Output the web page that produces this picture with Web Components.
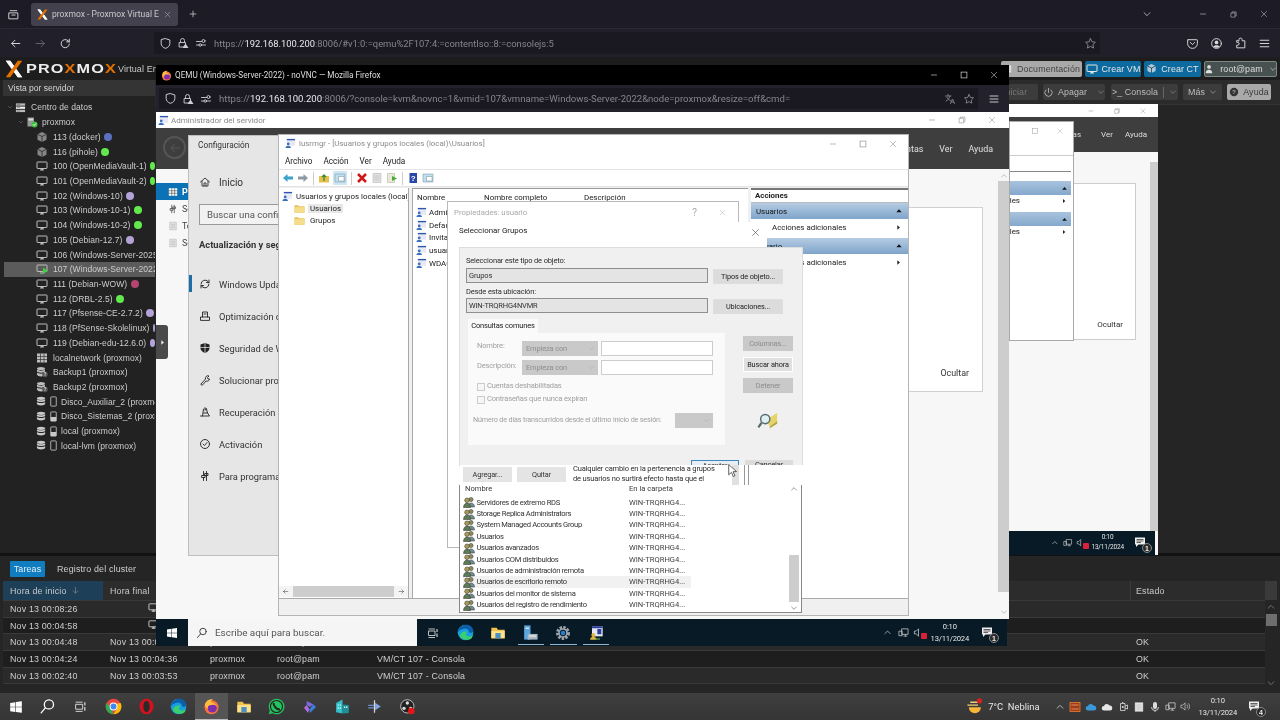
<!DOCTYPE html>
<html lang="es">
<head>
<meta charset="utf-8">
<title>Proxmox</title>
<style>
html, body { margin: 0; height: 100%; overflow: hidden; background: #252525; }
body { position: relative; width: 1280px; height: 720px; display: flex; flex-direction: column; font-family: "Liberation Sans", sans-serif; filter: blur(.35px); }
</style>
</head>
<body>
<x-firefox-top></x-firefox-top>
<x-proxmox></x-proxmox>
<x-host-taskbar></x-host-taskbar>
<x-nested-console></x-nested-console>
<x-novnc-window></x-novnc-window>
<x-tree-handle></x-tree-handle>

<script>
const S = 'fill="none" stroke="currentColor" stroke-width="1.8" stroke-linecap="round" stroke-linejoin="round"';
const WINFONT = 'Roboto, "Open Sans", sans-serif';

const ICONS = {
  back: `<path ${S} d="M20 12H5M11 6l-6 6 6 6"/>`,
  forward: `<path ${S} d="M4 12h15M13 6l6 6-6 6"/>`,
  reload: `<path ${S} d="M19 13a7.5 7.5 0 1 1-2.2-6L19 9M19 4v5h-5"/>`,
  shield: `<path ${S} d="M12 3l8 2.5V12c0 4.5-3.500 7.500-8 9-4.500-1.500-8-4.500-8-9V5.500z"/>`,
  lock: `<path ${S} d="M7 11V7a4 4 0 0 1 8 0v4M5 11h12v9H5z"/><path fill="currentColor" d="M17 13l6 9H11z"/>`,
  perms: `<path ${S} d="M3 9h10M3 16h5M13 16h8"/><circle ${S} cx="17" cy="8" r="3"/><circle ${S} cx="10.500" cy="16" r="2.500"/>`,
  star: `<path ${S} d="M12 3l2.800 5.800 6.200.900-4.500 4.400 1.100 6.300-5.600-3-5.600 3 1.100-6.300L3 9.700l6.200-.900z"/>`,
  menu: `<path ${S} d="M4 6h16M4 12h16M4 18h16"/>`,
  tabs: `<path ${S} d="M6 5h12M4 9h16v11H4zM9 13h6"/>`,
  plus: `<path ${S} d="M12 5v14M5 12h14"/>`,
  close: `<path fill="none" stroke="currentColor" stroke-width="1.200" d="M5 5l14 14M19 5L5 19"/>`,
  min: `<path fill="none" stroke="currentColor" stroke-width="1.400" d="M5 12h14"/>`,
  max: `<rect x="5" y="5" width="14" height="14" fill="none" stroke="currentColor" stroke-width="1.500"/>`,
  restore: `<path fill="none" stroke="currentColor" stroke-width="1.400" d="M5 8h11v11H5zM8 8V5h11v11h-3"/>`,
  chevron: `<path ${S} d="M5 9l7 7 7-7"/>`,
  caretup: `<path ${S} d="M5 15l7-7 7 7"/>`,
  pocket: `<path ${S} d="M4 5h16a1 1 0 0 1 1 1v6a9 9 0 0 1-18 0V6a1 1 0 0 1 1-1zM8 10l4 4 4-4"/>`,
  user: `<circle ${S} cx="12" cy="12" r="9"/><circle cx="12" cy="10" r="3.400" fill="currentColor"/><path fill="currentColor" d="M6 18c1-4 11-4 12 0-3 2.500-9 2.500-12 0z"/>`,
  ext: `<path ${S} d="M9 7V5a3 3 0 0 1 6 0v2h5v13H5v-5h2a2.500 2.500 0 0 0 0-5H5V7z"/>`,
  translate: `<path ${S} d="M3 6h11M8 3v3M12 6c-1 5-4 8-8 10M6 9c1 3 4 5 7 6M13 21l4-9 4 9M14.500 18h5"/>`,
  monitor: `<rect x="2" y="4" width="20" height="13" rx="1" fill="none" stroke="currentColor" stroke-width="2"/><path fill="currentColor" d="M8 19h8v2H8zM10 17h4v2h-4z"/>`,
  cube: `<path fill="currentColor" opacity=".65" d="M12 2l9 4.500v11L12 22l-9-4.500v-11z"/><path fill="none" stroke="#222" stroke-width="1.500" d="M3 6.500l9 4.500 9-4.500M12 11v11"/>`,
  power: `<path ${S} stroke-width="2.400" d="M12 3v9M6.500 6.500a8 8 0 1 0 11 0"/>`,
  help: `<circle cx="12" cy="12" r="10" fill="currentColor"/><text x="12" y="17" font-size="15" font-weight="700" text-anchor="middle" fill="#aaa" font-family="Liberation Sans">?</text>`,
  person: `<circle cx="12" cy="7" r="4.500" fill="currentColor"/><path fill="currentColor" d="M4 22c0-11 16-11 16 0z"/>`,
  grid: `<path fill="currentColor" d="M2 3h20v18H2z"/><path stroke="#222" stroke-width="1.200" d="M2 9h20M2 15h20M9 3v18M16 3v18"/>`,
  db: `<ellipse cx="11" cy="5" rx="9" ry="3.500" fill="currentColor"/><path fill="currentColor" d="M2 7c3 3 15 3 18 0v4c-3 3-15 3-18 0zM2 13c3 3 15 3 18 0v4c-1 5-17 5-18 0z"/>`,
  servers: `<path fill="#bbb" d="M2 3h20v5H2z"/><path fill="#eee" d="M2 10h20v5H2z"/><path fill="#bbb" d="M2 17h20v5H2z"/><path fill="#555" d="M4 5h7v1H4zM4 12h7v1H4zM4 19h7v1H4z"/>`,
  node: `<path fill="#999" d="M3 3h13v18H3z"/><path fill="#ddd" d="M5 5h9v4H5z"/><circle cx="17" cy="17" r="6" fill="#3fbf3f"/><path fill="none" stroke="#fff" stroke-width="2" d="M14 17l2 2 4-4"/>`,
  diskbar: `<rect x="6" y="2" width="12" height="20" rx="1" fill="none" stroke="currentColor" stroke-width="1.800"/>`,
  diskfill: `<rect x="6" y="2" width="12" height="20" rx="1" fill="none" stroke="currentColor" stroke-width="1.800"/><path fill="currentColor" d="M6 13h12v9H6z"/>`,
  folder: `<path fill="#e7c25e" d="M1 5h8l2 2h12v14H1z"/><path fill="#f6dd8c" d="M1 9h22v12H1z"/>`,
  home: `<path ${S} stroke-width="1.600" d="M3 12l9-8 9 8M6 10v10h12V10M10 20v-6h4v6"/>`,
  sync: `<path ${S} stroke-width="1.500" d="M4 12a8 8 0 0 1 14-5l2 2M20 12a8 8 0 0 1-14 5l-2-2M20 4v5h-5M4 20v-5h5"/>`,
  optimize: `<path ${S} stroke-width="1.500" d="M7 14V4h10v10M3 20v-6h18v6zM10 8h4"/>`,
  defender: `<path fill="currentColor" d="M12 2l9 3v7c0 5-4 8-9 10-5-2-9-5-9-10V5z"/><path stroke="#e6e6e6" stroke-width="1.500" d="M12 2v20M3 11h18"/>`,
  wrench: `<path ${S} stroke-width="1.500" d="M4 20l9-10a5 5 0 0 1 7-6l-3 3 1 3 3 0a5 5 0 0 1-7 4l-7 8z"/>`,
  recovery: `<path ${S} stroke-width="1.500" d="M3 20h18l-4-6M7 20l2-14h6l2 8H9M12 3l3 3-3 3"/>`,
  check: `<circle ${S} stroke-width="1.500" cx="12" cy="12" r="9"/><path ${S} stroke-width="1.500" d="M8 12l3 3 5-6"/>`,
  devtools: `<path ${S} stroke-width="1.700" d="M9 3v8M15 3v18M6 11h6v4H6zM12 7h6v4h-6zM9 15v6"/>`,
  search: `<circle ${S} cx="14" cy="9" r="6.500"/><path ${S} d="M9 14l-6 7"/>`,
  taskview: `<path fill="none" stroke="currentColor" stroke-width="1.700" d="M3 8h13v9H3zM3 4h13M3 21h13"/><path stroke="currentColor" stroke-width="2.200" d="M20 4v6M20 13v7"/>`,
  win: `<path fill="currentColor" d="M2 5l9-1.300V11.500H2zM12 3.500L22 2v9.500H12zM2 12.500h9v8L2 19.200zM12 12.500h10V22l-10-1.400z"/>`,
  net: `<path fill="none" stroke="currentColor" stroke-width="1.500" d="M8 4h14v12H8zM2 9h7v10H2zM12 20h8M16 16v4"/>`,
  sound: `<path fill="none" stroke="currentColor" stroke-width="1.500" d="M3 9h4l5-5v16l-5-5H3z"/>`,
  soundwave: `<path fill="none" stroke="currentColor" stroke-width="1.500" d="M2 9h4l5-5v16l-5-5H2zM15 8a6 6 0 0 1 0 8M18 5a10 10 0 0 1 0 14"/>`,
  notif: `<path fill="currentColor" d="M2 3h20v14H9l-5 5v-5H2z"/><path stroke="#333" stroke-width="1.500" d="M5 7h14M5 10h14M5 13h9"/>`,
  firefox: `<circle cx="12" cy="13" r="10" fill="#ff7139"/><circle cx="13" cy="14" r="6.500" fill="#7a2fb0"/><path fill="#ffbd3f" d="M3 8c2-5 7-7 11-6-2 1-3 3-3 4 4 0 8 3 9 7-2-3-5-4-7-3-4 0-7 1-6 5-3-1-5-4-4-7z"/>`,
  chrome: `<circle cx="12" cy="12" r="11" fill="#e8453c"/><path fill="#34a853" d="M12 23a11 11 0 0 1-9.500-16.500L8 14l2 2z"/><path fill="#fbbc05" d="M22 7a11 11 0 0 1-10 16l5-8-1-7z"/><circle cx="12" cy="12" r="5.500" fill="#fff"/><circle cx="12" cy="12" r="4.200" fill="#4285f4"/>`,
  opera: `<ellipse cx="12" cy="12" rx="10" ry="11" fill="#d5101f"/><ellipse cx="12" cy="12" rx="4.500" ry="8" fill="#2a2a2a"/>`,
  edge: `<circle cx="12" cy="12" r="11" fill="#1b9de2"/><path fill="#38d16c" d="M4 17c2 5 10 7 15 4 1 0 3-3 4-6-3 3-8 4-10 1-1-2 0-4 2-5-5-1-10 1-11 6z"/><path fill="#0b5ea8" d="M1 12C2 5 8 1 13 1c5 0 9 3 10 8 0 3-3 4-6 3 0-5-5-7-9-5-3 1-6 3-7 5z"/>`,
  explorer: `<path fill="#f0c14b" d="M2 4h8l2 3h10v13H2z"/><path fill="#ffe08a" d="M2 9h20v11H2z"/><path fill="#4a90c4" d="M8 12h8v8H8z"/>`,
  whatsapp: `<path fill="#22c35e" d="M12 1a11 11 0 0 0-9.500 16.500L1 23l5.700-1.500A11 11 0 1 0 12 1z"/><path fill="none" stroke="#222" stroke-width="2.800" d="M8 7c-1 4 5 10 9 9"/><circle cx="12" cy="12" r="8.500" fill="none" stroke="#222" stroke-width="1.600"/>`,
  copilot: `<path fill="#7a6be0" d="M7 3l10 5-5 4-5-3z"/><path fill="#3a7fe0" d="M17 8l4 4-9 9-1-5z"/><path fill="#b06be0" d="M7 9l-4 4 6 8 2-6z"/>`,
  azure: `<path fill="#33c0c8" d="M3 7l9-5v20l-9-2z"/><path fill="#1d8f97" d="M12 9l9 1v11l-9 1z"/><path fill="#c9eef0" d="M5 9h2v2H5zM8 9h2v2H8zM5 13h2v2H5zM8 13h2v2H8zM14 12h2v2h-2zM17 12h2v2h-2z"/>`,
  arrowapp: `<path fill="#6f8cc8" d="M2 9h9v2H2zM2 13h9v2H2z"/><path fill="#7fa6e6" d="M13 6l9 6-9 6z"/><path fill="#d6d6d6" d="M11 2h2v20h-2z"/>`,
  obs: `<circle cx="11" cy="11" r="10" fill="#222" stroke="#ddd" stroke-width="1.200"/><circle cx="11" cy="6" r="2.500" fill="#ddd"/><circle cx="6" cy="14" r="2.500" fill="#ddd"/><circle cx="16" cy="14" r="2.500" fill="#ddd"/><circle cx="17" cy="18" r="5" fill="#e61414"/>`,
  server: `<path fill="#5aa5dc" d="M3 2h9v20H3z"/><path fill="#cfe4f4" d="M5 5h5v2H5z"/><path fill="#a9b7c2" d="M8 14h14v8H8z"/><path fill="#dfe6eb" d="M10 16h10v2H10z"/>`,
  gear: `<circle cx="12" cy="12" r="8" fill="none" stroke="#9aa3ab" stroke-width="5" stroke-dasharray="3.500 1.800"/><circle cx="12" cy="12" r="6" fill="none" stroke="#9aa3ab" stroke-width="2.500"/><circle cx="12" cy="12" r="3.500" fill="#2a7ec8"/>`,
  mmc: `<path fill="#e8e8f4" d="M6 2h16v15H6z"/><path fill="#2c3f9e" d="M6 2h16v3H6zM14 6h6v8h-6z"/><circle cx="8" cy="15" r="3" fill="#e0b840"/><path fill="#e0b840" d="M3 22c0-6 10-6 10 0z"/><path fill="#58a04c" d="M11 20h7v2h-7z"/>`,
  weather: `<path fill="#f5b63a" d="M4 13h17a8.500 8.500 0 0 1-17 0z"/><path fill="#f0d27a" d="M2 9h15v2H2zM6 5h14v2H6z"/><circle cx="19" cy="4" r="3.800" fill="#d42020"/>`,
  cloud: `<path fill="currentColor" d="M6 19a4.500 4.500 0 0 1 0-9 6 6 0 0 1 11-1 5 5 0 0 1 1 10z"/>`,
  scr: `<rect x="2" y="3" width="20" height="18" fill="#a13a20" stroke="#e8872d" stroke-width="1.500"/><path fill="none" stroke="#f0b060" stroke-width="1.500" d="M5 8h14M5 16h14"/>`,
  meet: `<path fill="none" stroke="currentColor" stroke-width="1.600" d="M7 5h9v14H7zM10 3h3M16 10l5-2v8l-5-2"/><circle cx="11.500" cy="12" r="2" fill="currentColor"/>`,
  mic: `<rect x="8" y="2" width="8" height="14" rx="4" fill="currentColor"/><path fill="none" stroke="currentColor" stroke-width="1.800" d="M5 12a7 7 0 0 0 14 0M12 19v3"/>`,
  mag: `<path fill="#e6d36a" d="M10 12l12-8v9l-8 6z"/><path fill="#b8a53a" d="M14 19l8-6v3l-8 5z"/><circle cx="9" cy="11" r="5" fill="#dff0f4" stroke="#5c6b70" stroke-width="1.600"/><path stroke="#5c6b70" stroke-width="2.400" d="M5 15l-3.500 5"/>`,
  group: `<circle cx="16" cy="7" r="4.200" fill="#8c8a62" stroke="#38372a"/><path fill="#6f8b93" stroke="#38372a" d="M9 22c0-11 14-11 14 0z"/><circle cx="8" cy="8.500" r="4.600" fill="#a89a5a" stroke="#2f2e24"/><path fill="#5c7a58" stroke="#2f2e24" d="M1 23c0-12 14-12 14 0z"/>`,
  msc: `<path fill="#e8e8f4" d="M4 2h18v15H4z"/><path fill="#2c55b0" d="M4 2h18v3H4z"/><circle cx="7" cy="13" r="3" fill="#3a6fc0"/><path fill="#3a6fc0" d="M1 22c0-7 12-7 12 0z"/>`,
  triup: `<path fill="currentColor" d="M4 16L12 7l8 9z"/>`,
  triright: `<path fill="currentColor" d="M8 4l9 8-9 8z"/>`,
  arrowleft: `<path fill="#3ba3c9" d="M2 12l9-8v5h11v6H11v5z"/>`,
  arrowright: `<path fill="#8d9aa4" d="M22 12l-9-8v5H2v6h11v5z"/>`,
  up: `<path fill="#e4c14e" d="M2 8h20v13H2z"/><path stroke="#3a8a2c" stroke-width="2.500" fill="none" d="M12 18V6M8 10l4-4 4 4"/>`,
  pane: `<path fill="#bfe0ee" stroke="#6f8ea0" d="M2 4h20v16H2z"/><path fill="#fff" stroke="#6f8ea0" d="M9 9h11v9H9z"/>`,
  delx: `<path stroke="#d01818" stroke-width="5" d="M4 4l16 16M20 4L4 20"/>`,
  props: `<path fill="#e2e2e2" stroke="#a8a8a8" d="M4 3h16v18H4z"/><path stroke="#a8a8a8" d="M7 8h10M7 12h10M7 16h10"/>`,
  exportl: `<path fill="#e8e8d8" stroke="#a8a890" d="M3 3h14v18H3z"/><path fill="#49a83a" d="M12 8l10 5-10 5z"/>`,
  helpbook: `<path fill="#2848a8" d="M5 2h15v20H5z"/><text x="12.500" y="18" font-size="16" font-weight="700" text-anchor="middle" fill="#fff" font-family="Liberation Sans">?</text>`,
  vmrun: `<rect x="2" y="4" width="20" height="13" rx="1" fill="none" stroke="currentColor" stroke-width="2"/><path fill="currentColor" d="M8 19h8v2H8z"/><path fill="#3fd13f" d="M14 9l10 6.500-10 6.500z"/>`,
  backup: `<ellipse cx="10" cy="5" rx="8" ry="3.200" fill="currentColor"/><path fill="currentColor" d="M2 7c3 3 13 3 16 0v4c-3 3-13 3-16 0zM2 13c3 3 13 3 16 0v4c-1 5-15 5-16 0z"/><circle cx="18" cy="17" r="5.500" fill="#555"/><text x="18" y="20.500" font-size="10" font-weight="700" text-anchor="middle" fill="#ddd" font-family="Liberation Sans">?</text>`,
  xlogo: `<path fill="#e8e8e8" d="M1 1h6l16 22h-6z"/><path fill="#e57000" d="M23 1h-6L1 23h6z"/><path fill="#fff" d="M1 1h6l5 7-3 4z"/><path fill="#fff" d="M23 23h-6l-5-7 3-4z"/>`,
  cursor: `<path fill="#fff" stroke="#111" stroke-width="1.200" d="M5 1v19l5-4.500 3.500 7.500 3-1.400-3.500-7.300 6.500-.300z"/>`
};

/* small base: renders css + markup into an open shadow root once connected */
class Box extends HTMLElement {
  connectedCallback() {
    if (this.shadowRoot) return;
    this.attachShadow({ mode: 'open' });
    this.shadowRoot.innerHTML = `<style>${this.css()}</style>${this.markup()}`;
  }
  css() { return ':host{display:block}'; }
  markup() { return '<slot></slot>'; }
}

class XIcon extends Box {
  css() {
    const s = this.getAttribute('s') || 12;
    return `:host{display:inline-flex;flex:none;width:${s}px;height:${s}px;color:${this.getAttribute('c') || 'inherit'}}
      svg{width:100%;height:100%;display:block;overflow:visible}`;
  }
  markup() {
    return `<svg viewBox="0 0 24 24" aria-hidden="true">${ICONS[this.getAttribute('n')] || ''}</svg>`;
  }
}
customElements.define('x-icon', XIcon);

const I = (n, s, c, st) => `<x-icon n="${n}" s="${s}"${c ? ` c="${c}"` : ''}${st ? ` style="${st}"` : ''}></x-icon>`;

/* url field + tool buttons, used by both firefox windows */
class XFirefoxBar extends Box {
  css() {
    return `:host{display:flex;align-items:center;height:100%;color:#d8d8dc;font:${this.getAttribute('fs') || 9.4}px ${WINFONT}}
      .addr{position:relative;display:flex;align-items:center;background:#1a1921;height:calc(100% - 6px);color:#85858c}
      .addr x-icon{color:#cfcfd4}
      .url{white-space:nowrap;overflow:hidden}
      b{font-weight:400;color:#e8e8ea}
      .fill{flex:1}`;
  }
  markup() {
    const a = this.getAttribute('url').split('|');
    return `<slot name="before"></slot>
    <div class="addr" style="margin-left:${this.getAttribute('ml')}px;width:${this.getAttribute('w')}px;padding-left:5px;box-sizing:border-box">
      ${I('shield', 13)}<span style="width:5px"></span>${I('lock', 12)}<span style="width:6px"></span>${I('perms', 12)}<span style="width:7px"></span>
      <span class="url">${a[0]}<b>${a[1]}</b>${a[2]}</span>
      <span class="fill"></span><slot name="inside"></slot>
    </div><slot name="after"></slot>`;
  }
}
customElements.define('x-firefox-bar', XFirefoxBar);

class XFirefoxTop extends Box {
  css() {
    return `:host{display:block;flex:none;height:57px;background:#1d1c26;color:#d0d0d4;font:8.500px ${WINFONT}}
      .tabs{height:29px;display:flex;align-items:center;position:relative;border-bottom:1px solid #2a2936;box-sizing:border-box}
      .tab{margin-left:11px;width:147px;height:23px;background:#42414d;border-radius:3px;display:flex;align-items:center;padding:0 6px;box-sizing:border-box;gap:4px;color:#c8c8cc}
      .tab span{flex:1;overflow:hidden;white-space:nowrap}
      .bar{height:28px;background:#201f2a}
      .r{margin-left:auto;display:flex;gap:0;align-items:center}
      .ic{display:flex;gap:12px;align-items:center}`;
  }
  markup() {
    return `<div class="tabs">
      <span style="margin-left:7px;display:inline-flex">${I('tabs', 13)}</span>
      <div class="tab">${I('xlogo', 11)}<span>proxmox - Proxmox Virtual Environment</span>${I('close', 9)}</div>
      <span style="margin-left:10px;display:inline-flex">${I('plus', 10)}</span>
      <div class="r">${I('chevron', 10)}<span style="width:46px"></span>${I('min', 10)}<span style="width:21px"></span>${I('restore', 9)}<span style="width:21px"></span>${I('close', 10)}<span style="width:11px"></span></div>
    </div>
    <div class="bar"><x-firefox-bar ml="0" w="946" url="https://|192.168.100.200|:8006/#v1:0:=qemu%2F107:4:=contentIso::8:=consolejs:5">
      <span slot="before" class="ic" style="display:flex;gap:12px;padding-left:9px;width:154px;box-sizing:border-box">${I('back', 13)}${I('forward', 13, '#66656e')}${I('reload', 13)}</span>
      <span slot="inside" style="display:inline-flex;margin-right:3px">${I('star', 13)}</span>
      <span slot="after" style="display:flex;gap:11px;margin-left:86px">${I('pocket', 13)}${I('user', 13)}${I('ext', 13)}${I('menu', 13)}</span>
    </x-firefox-bar></div>`;
  }
}
customElements.define('x-firefox-top', XFirefoxTop);

class XTreeRow extends Box {
  css() {
    const sel = this.hasAttribute('sel');
    return `:host{display:flex;align-items:center;height:14.720px;padding-left:${this.getAttribute('p') || 36}px;gap:5px;color:#cdcdcd;font-size:8.500px;letter-spacing:.05px;white-space:nowrap;${sel ? 'background:#5b5b5b;margin-left:4px;padding-left:32px;' : ''}}
      i{display:inline-block;width:8px;height:8px;border-radius:50%;background:${this.getAttribute('dot') || 'transparent'};margin-left:-1.500px}`;
  }
  markup() {
    return `<slot name="icon"></slot><slot></slot>${this.hasAttribute('dot') ? '<i></i>' : ''}`;
  }
}
customElements.define('x-tree-row', XTreeRow);

class XTree extends Box {
  css() {
    return `:host{display:block;width:155px;flex:none;background:#222;overflow:hidden;color:#bbb}
      .head{height:16px;margin:0 0 4px 3px;background:#343434;color:#d6d6d6;font-size:8.500px;line-height:16px;padding-left:5px}`;
  }
  markup() {
    const P = '#b3a3d9', G = '#62ea4c', vm = [
      ['cube', '113 (docker)', '#5a71bf'], ['cube', '116 (pihole)', G],
      ['monitor', '100 (OpenMediaVault-1)', G], ['monitor', '101 (OpenMediaVault-2)', G],
      ['monitor', '102 (Windows-10)', P], ['monitor', '103 (Windows-10-1)', G], ['monitor', '104 (Windows-10-2)', G],
      ['monitor', '105 (Debian-12.7)', P], ['monitor', '106 (Windows-Server-2025)', P],
      ['vmrun', '107 (Windows-Server-2022)', G, 1], ['monitor', '111 (Debian-WOW)', '#b3466e'], ['monitor', '112 (DRBL-2.5)', G],
      ['monitor', '117 (Pfsense-CE-2.7.2)', P], ['monitor', '118 (PfSense-Skolelinux)', P], ['monitor', '119 (Debian-edu-12.6.0)', P],
      ['grid', 'localnetwork (proxmox)'], ['backup', 'Backup1 (proxmox)'], ['backup', 'Backup2 (proxmox)']
    ];
    const disks = [['diskbar', 'Disco_Auxiliar_2 (proxmox)'], ['diskfill', 'Disco_Sistemas_2 (proxmox)'], ['diskfill', 'local (proxmox)'], ['diskbar', 'local-lvm (proxmox)']];
    return `<div class="head">Vista por servidor</div>
      <x-tree-row p="7">
        <span slot="icon" style="display:flex;align-items:center;gap:2px">${I('chevron', 6, '#888')}${I('servers', 11)}</span>Centro de datos</x-tree-row>
      <x-tree-row p="18" style="gap:4px">
        <span slot="icon" style="display:flex;align-items:center;gap:2px">${I('chevron', 6, '#888')}${I('node', 12)}</span>proxmox</x-tree-row>
      ${vm.map(r => `<x-tree-row ${r[2] ? `dot="${r[2]}"` : ''} ${r[3] ? 'sel' : ''}>
        <span slot="icon" style="display:inline-flex">${I(r[0], 12, '#bdbdbd')}</span>${r[1]}</x-tree-row>`).join('')}
      ${disks.map(r => `<x-tree-row style="gap:2px"><span slot="icon" style="display:flex;align-items:center;gap:1px">${I('db', 11, '#c8c8c8')}${I(r[0], 11, '#c8c8c8')}</span>${r[1]}</x-tree-row>`).join('')}`;
  }
}
customElements.define('x-tree', XTree);

class XPveButton extends Box {
  css() {
    const t = this.getAttribute('t');
    const skin = { blue: 'background:#0d6a9f;color:#e6e6e6', light: 'background:#a9a9a9;color:#333', user: 'background:#47514f;color:#ddd;border:1px solid #7f8886', dark: 'background:#3c3c3c;color:#bdbdbd' }[t];
    return `:host{display:inline-flex;align-items:center;justify-content:center;gap:4px;box-sizing:border-box;width:${this.getAttribute('w')}px;height:${this.getAttribute('h') || 16}px;font-size:8.900px;border-radius:2px;white-space:nowrap;letter-spacing:.1px;${skin}}
      .s{width:1px;height:11px;background:#666;margin:0 1px}`;
  }
  markup() {
    return `<slot></slot>${this.hasAttribute('split') ? `<span class="s"></span>${I('chevron', 8, '#999')}` : ''}`;
  }
}
customElements.define('x-pve-button', XPveButton);

class XTaskPanel extends Box {
  css() {
    return `:host{display:block;position:relative;flex:none;height:137px;background:#252525;border-top:3px solid #121212;color:#cfcfcf;font-size:8.900px;letter-spacing:.16px;box-sizing:content-box;overflow:hidden}
      .tabs{display:flex;align-items:center;height:25px;padding-left:10px;gap:12px}
      .t{background:#0f7dc0;color:#e6f1f8;height:16px;line-height:16px;width:35px;text-align:center;border-radius:1px}
      .row,.hd{display:grid;grid-template-columns:100px 100px 67px 100px 760px 128px;height:16.700px;align-items:center;margin:0 15px 0 3px;box-sizing:border-box;border-bottom:1px solid #3a3a3a;position:relative}
      .hd{height:20px;background:#2c2c2c;color:#c8c8c8}
      .hd>span:first-child{background:#1d3f58;height:100%;display:flex;align-items:center;gap:4px}
      .hd>span,.row>span{padding-left:7px;white-space:nowrap;overflow:hidden}
      .hd>span:nth-child(6){border-left:1px solid #3c3c3c;height:100%;display:flex;align-items:center;padding-left:5px}
      .row>span:nth-child(6){padding-left:6px}
      .a{background:#2a2a2a}.b{background:#1e1e1e}
      .bar{position:absolute;right:3px;top:44px;width:12px;height:88px;background:#252525;display:flex;flex-direction:column;align-items:center;color:#888;padding-top:2px;box-sizing:border-box}
      .th{width:11px;height:12px;background:#6e6e6e;margin-top:2px}
      .sp{flex:1}
      .fill{position:absolute;right:3px;top:25px;width:12px;height:20px;background:#3a3a3a}`;
  }
  markup() {
    const rows = [
      ['Nov 13 00:08:26', I('monitor', 11, '#ccc', 'margin-left:38px'), 'proxmox', 'root@pam', 'VM/CT 107 - Consola', ''],
      ['Nov 13 00:04:58', I('monitor', 11, '#ccc', 'margin-left:38px'), 'proxmox', 'root@pam', 'VM/CT 107 - Consola', ''],
      ['Nov 13 00:04:48', 'Nov 13 00:04:53', 'proxmox', 'root@pam', 'VM/CT 107 - Consola', 'OK'],
      ['Nov 13 00:04:24', 'Nov 13 00:04:36', 'proxmox', 'root@pam', 'VM/CT 107 - Consola', 'OK'],
      ['Nov 13 00:02:40', 'Nov 13 00:03:53', 'proxmox', 'root@pam', 'VM/CT 107 - Consola', 'OK']
    ];
    return `<div class="tabs"><span class="t">Tareas</span><span>Registro del cluster</span></div>
      <div class="hd"><span>Hora de inicio ${I('forward', 9, '#889', 'transform:rotate(90deg)')}</span><span>Hora final</span><span>Nodo</span><span>Nombre de usuario</span><span>Descripción</span><span>Estado</span></div>
      ${rows.map((r, i) => `<div class="row ${i % 2 ? 'b' : 'a'}">${r.map(c => `<span>${c}</span>`).join('')}</div>`).join('')}
      <i class="fill"></i>
      <div class="bar">${I('caretup', 10)}<span class="th"></span><span class="sp"></span>${I('chevron', 10)}</div>`;
  }
}
customElements.define('x-task-panel', XTaskPanel);

class XProxmox extends Box {
  css() {
    return `:host{flex:1;display:flex;flex-direction:column;background:#252525;min-height:0;color:#ddd}
      .top{display:flex;align-items:center;height:23px;background:#1d1d1d;padding:0 3px 0 5px;flex:none}
      .logo{font:700 13px "Liberation Sans",sans-serif;letter-spacing:.9px;color:#eee;transform-origin:left;white-space:nowrap;transform:scaleX(1.25);width:90px}
      .logo em{font-style:normal;color:#e57000}
      .ver{font-size:9px;color:#c6c6c6;margin-left:2px;letter-spacing:.1px}
      .sp{flex:1}
      .btns{display:flex;gap:3px}
      .main{flex:1;display:flex;min-height:0}
      .right{flex:1;display:flex;flex-direction:column}
      .tb{height:24px;background:#2b2b2b;border-bottom:1px solid #333;display:flex;align-items:center;justify-content:flex-end;gap:5px;padding-right:9px;flex:none}`;
  }
  markup() {
    return `<div class="top">
        ${I('xlogo', 18)}<span style="width:3px"></span><div class="logo"><span>PRO<em>X</em>MO<em>X</em></span></div>
        <span class="ver">Virtual Environment 8.2.2</span><span class="sp"></span>
        <div class="btns">
          <x-pve-button w="81" t="light" style="color:#444">${I('props', 10)}Documentación</x-pve-button>
          <x-pve-button w="56" t="blue">${I('monitor', 12, '#e6e6e6')}Crear VM</x-pve-button>
          <x-pve-button w="57" t="blue">${I('cube', 11, '#fff')}Crear CT</x-pve-button>
          <x-pve-button w="73" t="user">${I('person', 10)}&nbsp;root@pam&nbsp;${I('chevron', 8)}</x-pve-button>
        </div></div>
      <div class="main"><x-tree></x-tree><div class="right">
        <div class="tb">
          <x-pve-button w="46" t="dark" h="16" style="color:#777">Iniciar</x-pve-button>
          <x-pve-button w="62" t="dark" h="16" split>${I('power', 11)}Apagar</x-pve-button>
          <x-pve-button w="67" t="dark" h="16" split style="margin-left:1px">&gt;_ Consola</x-pve-button>
          <x-pve-button w="39" t="dark" h="16">Más ${I('chevron', 8)}</x-pve-button>
          <x-pve-button w="44" t="light" h="16" style="color:#3a3a3a">${I('help', 10, '#333')}Ayuda</x-pve-button>
        </div></div></div>
      <x-task-panel></x-task-panel>`;
  }
}
customElements.define('x-proxmox', XProxmox);

class XWinClock extends Box {
  css() {
    return `:host{display:inline-flex;flex-direction:column;align-items:center;font:${this.getAttribute('f') || 7.600}px/1.500 ${WINFONT};letter-spacing:-.2px;color:#e6e6e6;white-space:nowrap}`;
  }
  markup() { return '<span>0:10</span><span>13/11/2024</span>'; }
}
customElements.define('x-win-clock', XWinClock);

class XNotifIcon extends Box {
  css() {
    return `:host{display:inline-block;position:relative;width:14px;height:14px;color:#eee}
      b{position:absolute;right:-4px;bottom:-3px;width:10px;height:10px;line-height:9px;text-align:center;font:700 7px/10px "Liberation Sans";border:1px solid #888;border-radius:50%;background:#2a2a2a;color:#eee;box-sizing:border-box}`;
  }
  markup() { return `${I('notif', 12)}<b>${this.getAttribute('num')}</b>`; }
}
customElements.define('x-notif-icon', XNotifIcon);

/* the tray shared by the vm taskbars, k scales the nested copy */
class XVmTray extends Box {
  css() {
    return `:host{display:flex;align-items:center;color:#ddd;flex:none}
      .m{position:relative;display:inline-flex}
      .m i{position:absolute;right:-3px;bottom:-1px;width:6px;height:6px;background:#d8223c;border-radius:1px}`;
  }
  markup() {
    const k = +(this.getAttribute('k') || 1);
    return `${I('caretup', 9 * k)}<span style="width:${6 * k}px"></span>${I('net', 11 * k)}<span style="width:${4 * k}px"></span>
      <span class="m">${I('sound', 11 * k)}<i></i></span><span style="width:${7 * k}px"></span>
      <x-win-clock f="${7.6 * k}"></x-win-clock><span style="width:${12 * k}px"></span><x-notif-icon num="1"></x-notif-icon>`;
  }
}
customElements.define('x-vm-tray', XVmTray);

class XVmTaskbar extends Box {
  css() {
    return `:host{display:flex;align-items:center;height:27px;width:851px;background:#071a26;flex:none;color:#ddd;font:9.500px ${WINFONT}}
      .start{width:32px;display:flex;justify-content:center}
      .search{width:229px;height:100%;background:#f5f5f5;color:#555;display:flex;align-items:center;gap:7px;padding-left:8px;box-sizing:border-box;font-size:9.900px}
      .apps{display:flex;height:100%;align-items:center}
      .app{width:32.500px;height:100%;display:flex;align-items:center;justify-content:center;position:relative;box-sizing:border-box}
      .on::after{content:"";position:absolute;left:3px;right:3px;bottom:1px;height:1.500px;background:#8fb4cf}
      .sp{flex:1}`;
  }
  markup() {
    return `<div class="start">${I('win', 12, '#fff')}</div>
      <div class="search">${I('search', 12, '#333')}Escribe aquí para buscar.</div>
      <div class="apps"><span class="app" style="margin-left:0">${I('taskview', 12)}</span>
        <span class="app">${I('edge', 17)}</span><span class="app">${I('explorer', 16)}</span>
        <span class="app on">${I('server', 17)}</span><span class="app on">${I('gear', 16)}</span><span class="app on">${I('mmc', 16)}</span></div>
      <span class="sp"></span><x-vm-tray style="margin-right:12px"></x-vm-tray>`;
  }
}
customElements.define('x-vm-taskbar', XVmTaskbar);

class XHostTaskbar extends Box {
  css() {
    return `:host{display:flex;align-items:center;height:27px;flex:none;background:linear-gradient(#3f3f3f,#353535);color:#eee;font:9.500px ${WINFONT}}
      .a{width:32.700px;height:100%;display:flex;align-items:center;justify-content:center;box-sizing:border-box}
      .on{background:#555;border-bottom:1.500px solid #bbb}
      .sp{flex:1}
      .tray{display:flex;align-items:center;gap:4px}
      .w{font-size:9.400px;margin:0 11px 0 1px;white-space:nowrap;color:#e8e8e8}`;
  }
  markup() {
    return `<span class="a">${I('win', 14, '#fff')}</span><span class="a" style="margin-left:-2px">${I('search', 17, '#fff')}</span>
      <span class="a" style="margin-left:1px">${I('taskview', 13, '#ddd')}</span>
      <span class="a">${I('chrome', 17)}</span><span class="a">${I('opera', 17)}</span><span class="a">${I('edge', 17)}</span>
      <span class="a on">${I('firefox', 17)}</span><span class="a">${I('explorer', 16)}</span><span class="a">${I('whatsapp', 17)}</span>
      <span class="a">${I('copilot', 16)}</span><span class="a">${I('azure', 17)}</span><span class="a">${I('arrowapp', 15)}</span>
      <span class="a">${I('obs', 16)}</span>
      <span class="sp"></span>
      <div class="tray">${I('weather', 17)}<span class="w">7°C &nbsp;Neblina</span>
        ${I('caretup', 10, '#ddd')}${I('scr', 12)}${I('cloud', 12, '#3a9ad9')}${I('cloud', 12, '#e6e6e6')}${I('meet', 12, '#ddd')}
        ${I('props', 12)}${I('mic', 12, '#ddd')}${I('net', 11, '#ddd')}${I('soundwave', 11, '#ccc')}
        <x-win-clock style="margin:0 7px 0 4px"></x-win-clock><x-notif-icon num="4" style="margin-right:18px"></x-notif-icon></div>`;
  }
}
customElements.define('x-host-taskbar', XHostTaskbar);

/* behind the main window: an older copy of the same console, visible on the right */
class XNestedConsole extends Box {
  css() {
    return `:host{position:absolute;left:900px;top:104px;width:258px;height:451px;background:#f7f7f7;color:#333;font:8px ${WINFONT};display:flex;flex-direction:column;overflow:hidden}
      .t{height:13px;background:#fff;display:flex;justify-content:flex-end;align-items:center;gap:18px;padding-right:11px;color:#888;flex:none}
      .m{height:35px;background:#3e3e3e;display:flex;justify-content:flex-end;align-items:center;gap:12px;padding-right:11px;color:#ddd;flex:none}
      .m span:first-child{margin-right:8px}
      .b{flex:1;position:relative}
      .win{position:absolute;left:110px;top:-30px;width:63px;height:218px;background:#fff;box-shadow:0 0 0 1px #aaa;overflow:hidden}
      .ctl{height:17px;display:flex;gap:17px;justify-content:flex-end;align-items:center;padding-right:9px;color:#999}
      .band{position:absolute;left:0;right:2px;height:14px;background:linear-gradient(#a9c3de,#84a8cc);display:flex;justify-content:flex-end;align-items:center;padding-right:3px;color:#111}
      .row{position:absolute;left:-30px;right:2px;display:flex;align-items:center;padding:0 4px 0 0;color:#222;justify-content:flex-end;gap:41px}
      .line{position:absolute;top:33px;left:0;right:0;height:1px;background:#ccc}
      .line2{position:absolute;top:49px;left:0;right:2px;height:1px;background:#888}
      .panel{position:absolute;left:173px;top:31px;width:63px;height:157px;background:#fff;border:1px solid #ccc;border-left:none;box-sizing:border-box}
      .panel span{position:absolute;right:12px;bottom:10px}
      .sb{position:absolute;right:0;top:10px;bottom:0;width:8px;background:#cdcdcd}
      x-vm-tray{position:absolute;right:7px;top:0;height:100%}
      .bar{height:24px;width:255px;background:#071a26;position:relative;flex:none;align-self:flex-start}`;
  }
  markup() {
    return `<div class="t">${I('min', 8)}${I('restore', 8)}${I('close', 8)}</div>
      <div class="m"><span>Herramientas</span><span>Ver</span><span>Ayuda</span></div>
      <div class="b">
        <div class="panel"><span>Ocultar</span></div><div class="sb"></div>
        <div class="win">
          <div class="ctl">${I('max', 8)}${I('close', 8)}</div>
          <div class="line"></div><div class="line2"></div>
          <div class="band" style="top:59px">${I('triup', 7)}</div>
          <div class="row" style="top:74px"><span>adicionales</span>${I('triright', 6)}</div>
          <div class="band" style="top:90px">${I('triup', 7)}</div>
          <div class="row" style="top:105px"><span>adicionales</span>${I('triright', 6)}</div>
        </div>
      </div>
      <div class="bar"><x-vm-tray k=".85"></x-vm-tray></div>`;
  }
}
customElements.define('x-nested-console', XNestedConsole);

class XSettingsNav extends Box {
  css() {
    return `:host{position:absolute;left:32px;top:23px;width:91px;height:421px;background:#e6e6e6;border:1px solid #bfbfbf;box-sizing:border-box;overflow:hidden;color:#333;font:9.300px ${WINFONT};white-space:nowrap}
      .tt{position:absolute;left:9px;top:4px;font-size:8.300px}
      .home{position:absolute;left:10px;top:40px;display:flex;align-items:center;gap:8px;font-size:10px}
      .search{position:absolute;left:10px;top:68px;width:100px;height:21px;border:1.500px solid #999;background:#f2f2f2;color:#555;line-height:19px;padding-left:7px;box-sizing:border-box;font-size:9.600px}
      .h{position:absolute;left:10px;top:103px;font-weight:700;font-size:9.400px}
      .nav{position:absolute;left:0;top:132px;display:flex;flex-direction:column}
      .it{height:32px;display:flex;align-items:center;gap:8px;padding-left:10px;position:relative}
      .act::before{content:"";position:absolute;left:0;top:7px;width:3px;height:17px;background:#1b6ea8}`;
  }
  markup() {
    const rows = [['sync', 'Windows Update', 1], ['optimize', 'Optimización de entrega'], ['defender', 'Seguridad de Windows'], ['wrench', 'Solucionar problemas'], ['recovery', 'Recuperación'], ['check', 'Activación'], ['devtools', 'Para programadores']];
    return `<div class="tt">Configuración</div>
      <div class="home">${I('home', 12)}<span>Inicio</span></div>
      <div class="search">Buscar una configuración</div>
      <div class="h">Actualización y seguridad</div>
      <div class="nav">${rows.map(r => `<div class="it ${r[2] ? 'act' : ''}">${I(r[0], 12, '#222')}<span>${r[1]}</span></div>`).join('')}</div>`;
  }
}
customElements.define('x-settings-nav', XSettingsNav);

class XLusrmgr extends Box {
  css() {
    return `:host{position:absolute;left:123px;top:23px;width:629px;height:480px;background:#fff;box-shadow:0 0 0 1px #b5b5b5;display:flex;flex-direction:column;color:#222;font:7.900px ${WINFONT};overflow:hidden}
      .title{height:17px;display:flex;align-items:center;padding-left:6px;gap:3px;color:#8b8b8b;flex:none}
      .ctl{margin-left:auto;display:flex;gap:20px;padding-right:10px;color:#888}
      .menu{height:17px;display:flex;align-items:center;gap:11px;padding-left:6px;flex:none;font-size:8.200px}
      .tools{height:18px;border-top:1px solid #e4e4e4;border-bottom:1px solid #e4e4e4;display:flex;align-items:center;gap:3px;padding-left:3px;flex:none;box-sizing:border-box}
      .tools i{width:1px;height:13px;background:#ccc;margin:0 1px}
      .act{display:inline-flex;padding:1px;background:#cfe6f5}
      .body{flex:1;display:flex;gap:3px;padding-top:1px;background:#f0f0f0;min-height:0}
      .tree{width:130px;background:#fff;border-right:1px solid #a8a8a8;position:relative;padding-top:2px;box-sizing:border-box;flex:none;white-space:nowrap;overflow:hidden}
      .n{display:flex;align-items:center;gap:3px;height:12px;padding-left:3px}
      .n.s{padding-left:15px}
      .sel{background:#e8e8e8;padding:0 2px}
      .hs{position:absolute;left:0;right:0;bottom:1px;height:11px;background:#f4f4f4;display:flex;align-items:center;color:#444;justify-content:space-between;padding:0 3px;box-sizing:border-box}
      .hs b{flex:1;height:100%;background:#cdcdcd;margin:0 4px}
      .list{width:336px;background:#fff;border-left:1px solid #a8a8a8;border-top:1px solid #999;padding-top:2px;box-sizing:border-box;white-space:nowrap;overflow:hidden;flex:none}
      .lh{display:grid;grid-template-columns:67px 100px 100px;height:12px;padding-left:4px;margin-bottom:3px;align-items:center}
      .li{display:flex;align-items:center;gap:2px;height:12.800px;padding-left:3px}
      .side{flex:1;background:#fff;margin-left:0;border-top:2px solid #777;box-sizing:border-box}
      .sh{height:13px;font-weight:700;padding:1px 0 0 4px;border-bottom:1px solid #bbb;box-sizing:border-box}
      .band{height:16px;background:linear-gradient(#b5cce3,#7fa4ca);display:flex;justify-content:space-between;align-items:center;padding:0 5px;color:#111}
      .a{display:flex;align-items:center;justify-content:space-between;padding:0 6px 0 21px}
      .status{height:16px;background:#f0f0f0;border-top:1px solid #aaa;flex:none}`;
  }
  markup() {
    const users = [['msc', 'Administrador'], ['msc', 'DefaultAccount'], ['msc', 'Invitado'], ['msc', 'usuario'], ['msc', 'WDAGUtilityAccount']];
    return `<div class="title">${I('msc', 11)}lusrmgr - [Usuarios y grupos locales (local)\\Usuarios]<span class="ctl">${I('min', 10)}${I('max', 10)}${I('close', 10)}</span></div>
      <div class="menu"><span>Archivo</span><span>Acción</span><span>Ver</span><span>Ayuda</span></div>
      <div class="tools">${I('arrowleft', 12)}${I('arrowright', 12)}<i></i>${I('up', 12)}<span class="act">${I('pane', 12)}</span><i></i>${I('delx', 12)}${I('props', 12)}${I('exportl', 12)}<i></i>${I('helpbook', 12)}${I('pane', 12)}</div>
      <div class="body">
        <div class="tree">
          <div class="n">${I('msc', 11)}Usuarios y grupos locales (local)</div>
          <div class="n s">${I('folder', 11)}<span class="sel">Usuarios</span></div>
          <div class="n s">${I('folder', 11)}<span style="padding:0 2px">Grupos</span></div>
          <div class="hs">${I('back', 7)}<b></b>${I('forward', 7)}</div>
        </div>
        <div class="list">
          <div class="lh"><span>Nombre</span><span>Nombre completo</span><span>Descripción</span></div>
          ${users.map(u => `<div class="li">${I(u[0], 11)}${u[1]}</div>`).join('')}
        </div>
        <div class="side">
          <div class="sh">Acciones</div>
          <div class="band"><span>Usuarios</span>${I('triup', 8)}</div>
          <div class="a" style="height:19px;padding-bottom:3px;box-sizing:border-box"><span>Acciones adicionales</span>${I('triright', 7)}</div>
          <div class="band"><span>usuario</span>${I('triup', 8)}</div>
          <div class="a" style="height:16px"><span>Acciones adicionales</span>${I('triright', 7)}</div>
        </div>
      </div>
      <div class="status"></div>`;
  }
}
customElements.define('x-lusrmgr', XLusrmgr);

class XProps extends Box {
  css() {
    return `:host{position:absolute;left:292px;top:90px;width:290px;height:345px;background:#fff;box-shadow:0 0 0 1px #b8b8b8;font:7.800px ${WINFONT};color:#a8a8a8}
      .t{height:20px;display:flex;align-items:center;padding-left:6px}
      .c{margin-left:auto;display:flex;gap:21px;padding-right:11px;align-items:center;color:#aaa;font-size:10px}`;
  }
  markup() { return `<div class="t">Propiedades: usuario<span class="c">?${I('close', 9)}</span></div>`; }
}
customElements.define('x-props', XProps);

class XWinBtn extends Box {
  css() {
    const d = this.hasAttribute('off');
    return `:host{display:flex;align-items:center;justify-content:center;box-sizing:border-box;height:15px;background:${d ? '#c9c9c9' : '#dcdcdc'};color:${d ? '#8c8c8c' : '#222'};border:1px solid ${d ? '#c9c9c9' : '#dedede'};font-size:7.300px;letter-spacing:-.1px;white-space:nowrap}`;
  }
}
customElements.define('x-win-btn', XWinBtn);

class XSelectGroups extends Box {
  css() {
    return `:host{position:absolute;left:298px;top:110px;width:348px;display:flex;flex-direction:column;font:7.500px ${WINFONT};letter-spacing:-.16px;color:#2c2c2c}
      .t{width:313px;height:26px;background:#fff;display:flex;align-items:flex-start;padding:4px 0 0 5px;box-sizing:border-box;font-size:7.900px;letter-spacing:0;color:#222}
      .t x-icon{margin:1px 6px 0 auto}
      .dlg{margin-left:6px;width:342px;height:217px;background:#f0f0f0;position:relative;overflow:hidden;box-shadow:0 0 0 1px #ddd;flex:none}
      .lab{position:absolute;left:6px}
      .inp{position:absolute;left:6px;width:242px;height:15px;background:#e4e4e4;border:1px solid #8f8f8f;box-sizing:border-box;line-height:13px;padding-left:2px;color:#333}
      .bt{position:absolute;left:253px;width:70px}
      .tab{position:absolute;left:8px;top:71px;width:70px;height:14px;background:#fafafa;text-align:center;line-height:14px;color:#222;white-space:nowrap}
      .pn{position:absolute;left:8px;top:85px;width:257px;height:112px;background:#fafafa;color:#a0a0a0}
      .f{position:absolute;white-space:nowrap}
      .combo{position:absolute;background:#c9c9c9;color:#8f8f8f;height:15px;line-height:15px;padding-left:4px;box-sizing:border-box;display:flex;align-items:center;justify-content:space-between;padding-right:3px}
      .box{position:absolute;background:#fff;border:1px solid #ccc;box-sizing:border-box;height:15px}
      .cb{position:absolute;width:8px;height:8px;border:1px solid #ccc;box-sizing:border-box;background:#f6f6f6}
      .sd{position:absolute;left:283px;width:50px}
      .ok{position:absolute;left:231px;top:212px;width:48px;height:24px;border:1px solid #3c8ac0;box-sizing:border-box;background:#e8eef2;text-align:center;line-height:10px}
      .no{position:absolute;left:285px;top:212px;width:48px;height:24px;background:#dcdcdc;text-align:center;line-height:10px}
      .strip{margin-left:6px;width:350px;height:20px;background:#fff;position:relative;overflow:hidden;flex:none}
      .strip x-win-btn{position:absolute;top:2px;width:49px;background:#e4e4e4;color:#333;border-color:#e4e4e4}
      .note{position:absolute;left:113px;top:-1px;line-height:9.700px;width:170px;color:#2c2c2c;white-space:nowrap}
      .lin{position:absolute;top:0;height:20px;background:#999;width:1px}
      .mini{position:absolute;left:272px;top:0;width:7px;height:20px;background:#e0e0e0}
      .lst{margin-left:5px;width:343px;height:128px;background:#fff;border:1px solid #888;border-top:none;box-sizing:border-box;position:relative;flex:none;overflow:hidden;font-size:7.600px;letter-spacing:0}
      .lh{height:11.500px;display:flex;color:#3a3a3a;padding-left:5px;line-height:8px}
      .lh span:first-child{width:164px}
      .g{display:flex;align-items:center;height:11.400px;padding-left:3px;white-space:nowrap}
      .g span{width:150px;padding-left:1.500px;color:#333;letter-spacing:-.33px}
      .g em{font-style:normal;color:#444;margin-left:2.500px;padding-right:5px;width:59px;overflow:hidden}
      .g.h{background:linear-gradient(90deg,#f1f1f1 0,#f1f1f1 100%) 3px 0/228px 100% no-repeat}
      .vb{position:absolute;right:2px;top:0;bottom:0;width:10px;background:#fff;color:#555;display:flex;flex-direction:column;align-items:center;justify-content:space-between}
      .vb b{position:absolute;left:0;right:0;bottom:10px;height:47px;background:#cdcdcd}`;
  }
  markup() {
    const groups = ['Servidores de extremo RDS', 'Storage Replica Administrators', 'System Managed Accounts Group', 'Usuarios', 'Usuarios avanzados', 'Usuarios COM distribuidos', 'Usuarios de administración remota', 'Usuarios de escritorio remoto', 'Usuarios del monitor de sistema', 'Usuarios del registro de rendimiento'];
    return `<div class="t">Seleccionar Grupos${I('close', 11, '#333')}</div>
      <div class="dlg">
        <span class="lab" style="top:8px">Seleccionar este tipo de objeto:</span>
        <div class="inp" style="top:20px">Grupos</div><x-win-btn class="bt" style="top:21px">Tipos de objeto...</x-win-btn>
        <span class="lab" style="top:39px">Desde esta ubicación:</span>
        <div class="inp" style="top:50px">WIN-TRQRHG4NVMR</div><x-win-btn class="bt" style="top:51px">Ubicaciones...</x-win-btn>
        <div class="tab">Consultas comunes</div>
        <div class="pn">
          <span class="f" style="left:9px;top:8px">Nombre:</span><div class="combo" style="left:54px;top:8px;width:76px">Empieza con ${I('chevron', 7, '#aaa')}</div><div class="box" style="left:133px;top:8px;width:112px"></div>
          <span class="f" style="left:9px;top:28px">Descripción:</span><div class="combo" style="left:54px;top:27px;width:76px">Empieza con ${I('chevron', 7, '#aaa')}</div><div class="box" style="left:133px;top:27px;width:112px"></div>
          <div class="cb" style="left:9px;top:50px"></div><span class="f" style="left:19px;top:48px">Cuentas deshabilitadas</span>
          <div class="cb" style="left:9px;top:63px"></div><span class="f" style="left:19px;top:61px">Contraseñas que nunca expiran</span>
          <span class="f" style="left:5px;top:82px;font-size:7.200px">Número de días transcurridos desde el último inicio de sesión:</span>
          <div class="combo" style="left:207px;top:80px;width:38px;justify-content:flex-end">${I('chevron', 7, '#aaa')}</div>
        </div>
        <x-win-btn off class="sd" style="top:88px">Columnas...</x-win-btn>
        <x-win-btn class="sd" style="top:109px;border-color:#fff;background:#e0e0e0">Buscar ahora</x-win-btn>
        <x-win-btn off class="sd" style="top:130px">Detener</x-win-btn>
        <span style="position:absolute;left:297px;top:161px">${I('mag', 22)}</span>
        <div class="ok">Aceptar</div><div class="no">Cancelar</div>
      </div>
      <div class="strip">
        <x-win-btn style="left:3px">Agregar...</x-win-btn><x-win-btn style="left:57px">Quitar</x-win-btn>
        <div class="note">Cualquier cambio en la pertenencia a grupos<br>de usuarios no surtirá efecto hasta que el<br>usuario inicie sesión de nuevo.</div>
        <span class="mini"></span><span class="lin" style="left:284px"></span><span class="lin" style="left:288px"></span>
      </div>
      <div class="lst">
        <div class="lh"><span>Nombre</span><span>En la carpeta</span></div>
        ${groups.map((g, i) => `<div class="g ${i === 7 ? 'h' : ''}">${I('group', 12)}<span>${g}</span><em>WIN-TRQRHG4...</em></div>`).join('')}
        <div class="vb">${I('caretup', 8)}<b></b>${I('chevron', 8)}</div>
      </div>`;
  }
}
customElements.define('x-select-groups', XSelectGroups);

class XServerManager extends Box {
  css() {
    return `:host{flex:1;display:flex;flex-direction:column;position:relative;min-height:0;font:8.900px ${WINFONT};color:#888}
      .t{height:16px;background:#fff;display:flex;align-items:center;gap:2px;padding-left:2px;flex:none;font-size:8.050px}
      .ctl{margin-left:auto;display:flex;gap:20px;padding-right:12px}
      .m{height:41px;background:#3e3e3e;display:flex;align-items:center;justify-content:flex-end;gap:16px;padding:0 16px 0 0;color:#e0e0e0;flex:none;position:relative}
      .bk{position:absolute;left:7px;top:8px;width:23px;height:23px;border:2px solid #555;border-radius:50%;box-sizing:border-box;color:#555;display:flex;align-items:center;justify-content:center}
      .b{flex:1;background:#f7f7f7;position:relative;min-height:0}
      .rail{position:absolute;left:0;top:14px;width:32px;color:#444}
      .ri{height:17px;display:flex;align-items:center;gap:4px;padding-left:12px;box-sizing:border-box;white-space:nowrap;overflow:hidden}
      .ri.on{background:#0c72b6;color:#fff;font-weight:700}
      .panel{position:absolute;left:752px;top:38px;width:75px;height:185px;background:#fff;border:1px solid #d0d0d0;border-left:none;box-sizing:border-box;color:#333}
      .panel span{position:absolute;right:13px;bottom:13px}
      .sb{position:absolute;right:0;top:0;bottom:0;width:11px;background:#f7f7f7;color:#999;display:flex;flex-direction:column;align-items:center;justify-content:space-between;padding:3px 0;box-sizing:border-box}
      .sb b{position:absolute;left:0;right:0;top:12px;height:411px;background:#cdcdcd}`;
  }
  markup() {
    return `<div class="t">${I('msc', 11)}Administrador del servidor<span class="ctl">${I('min', 10)}${I('restore', 10)}${I('close', 10)}</span></div>
      <div class="m"><span class="bk">${I('back', 14)}</span><span>Herramientas</span><span>Ver</span><span>Ayuda</span></div>
      <div class="b">
        <div class="rail">
          <div class="ri on">${I('grid', 10, '#fff')}Panel</div>
          <div class="ri">${I('devtools', 10)}Servidor local</div>
          <div class="ri">${I('props', 10)}Todos los servidores</div>
          <div class="ri">${I('props', 10)}Servicios</div>
        </div>
        <div class="panel"><span>Ocultar</span></div>
        <div class="sb">${I('caretup', 8)}<b></b>${I('chevron', 8)}</div>
      </div>
      <x-vm-taskbar></x-vm-taskbar>
      <x-settings-nav></x-settings-nav>
      <x-lusrmgr></x-lusrmgr>
      <x-props></x-props>
      <x-select-groups></x-select-groups>
      <span style="position:absolute;left:570px;top:352px;display:inline-flex">${I('cursor', 13)}</span>`;
  }
}
customElements.define('x-server-manager', XServerManager);

class XNovncWindow extends Box {
  css() {
    return `:host{position:absolute;left:156px;top:65px;width:853px;height:581px;display:flex;flex-direction:column;z-index:1}
      .t{height:20px;background:#000;display:flex;align-items:center;padding-left:5px;gap:3px;color:#ddd;font:8.200px ${WINFONT};flex:none;white-space:nowrap}
      .ctl{margin-left:auto;display:flex;gap:20px;padding-right:10px;color:#eee}
      .bar{height:27px;background:#22212c;flex:none}`;
  }
  markup() {
    return `<div class="t">${I('firefox', 11)}QEMU (Windows-Server-2022) - noVNC — Mozilla Firefox<span class="ctl">${I('min', 10)}${I('max', 10)}${I('close', 10)}</span></div>
      <div class="bar"><x-firefox-bar ml="3" w="819" fs="9.57" url="https://|192.168.100.200|:8006/?console=kvm&amp;novnc=1&amp;vmid=107&amp;vmname=Windows-Server-2022&amp;node=proxmox&amp;resize=off&amp;cmd=">
        <span slot="inside" style="display:flex;gap:7px;margin-right:3px">${I('translate', 12)}${I('star', 12)}</span>
        <span slot="after" style="display:flex;margin-left:10px">${I('menu', 12)}</span>
      </x-firefox-bar></div>
      <x-server-manager></x-server-manager>`;
  }
}
customElements.define('x-novnc-window', XNovncWindow);

class XTreeHandle extends Box {
  css() {
    return `:host{position:absolute;left:156px;top:325px;width:12px;height:34px;background:#4a4a4a;border-radius:0 3px 3px 0;z-index:2;display:flex;align-items:center;justify-content:center;color:#eee}`;
  }
  markup() { return I('triright', 7); }
}
customElements.define('x-tree-handle', XTreeHandle);
</script>
</body>
</html>
